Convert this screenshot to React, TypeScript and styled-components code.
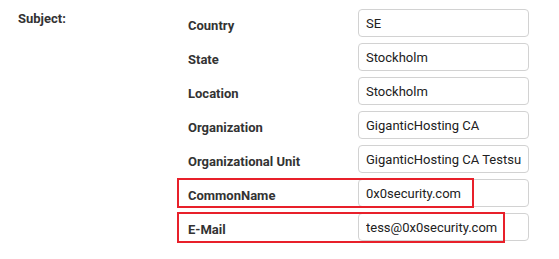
import React, {FC} from 'react'
import styled, {createGlobalStyle} from "styled-components";

const GlobalStyle = createGlobalStyle`
  body {
    margin: 0;
    background: #fff;
    font-family: Roboto, "Liberation Sans", sans-serif;
  }
`;

interface Field {
    label: string;
    value: string;
    mark?: {width: number; height: number};
}

const fields: Field[] = [
    {label: "Country", value: "SE"},
    {label: "State", value: "Stockholm"},
    {label: "Location", value: "Stockholm"},
    {label: "Organization", value: "GiganticHosting CA"},
    {label: "Organizational Unit", value: "GiganticHosting CA Testsuite"},
    {label: "CommonName", value: "0x0security.com", mark: {width: 297, height: 30}},
    {label: "E-Mail", value: "tess@0x0security.com", mark: {width: 328, height: 31}},
];

const FieldRow: FC<Field> = ({label, value, mark}) => (
    <Row>
        <Label>{label}</Label>
        <Input type="text" readOnly defaultValue={value}/>
        {mark && <Highlight $width={mark.width} $height={mark.height}/>}
    </Row>
)

export default function App() {
    return (
        <>
            <GlobalStyle/>
            <Page>
                <Title>Subject:</Title>
                <Fields>
                    {fields.map(f => <FieldRow key={f.label} {...f}/>)}
                </Fields>
            </Page>
        </>
    )
}

const Page = styled.div`
  display: flex;
  padding: 9px 0 0 18px;
  width: 559px;
  height: 259px;
  box-sizing: border-box;
`;

const Title = styled.div`
  width: 170px;
  padding-top: 2px;
  font-size: 13px;
  font-weight: 700;
  color: #333;
`;

const Fields = styled.div`
  display: flex;
  flex-direction: column;
  gap: 6px;
`;

const Row = styled.div`
  position: relative;
  display: grid;
  grid-template-columns: 170px 171px;
  align-items: center;
  height: 28px;
`;

const Label = styled.label`
  padding-top: 5px;
  font-size: 13px;
  font-weight: 700;
  color: #333;
`;

const Input = styled.input`
  box-sizing: border-box;
  height: 28px;
  width: 171px;
  padding: 0 7px;
  border: 1px solid #d2d2d2;
  border-radius: 4px;
  font-family: Roboto, "Liberation Sans", sans-serif;
  font-size: 13px;
  color: #212121;
  background: #fff;

  &:focus {
    outline: none;
  }
`;

const Highlight = styled.div<{$width: number; $height: number}>`
  position: absolute;
  left: -11px;
  top: -1px;
  width: ${p => p.$width}px;
  height: ${p => p.$height}px;
  box-sizing: border-box;
  border: 2px solid #e8202a;
  pointer-events: none;
`;
